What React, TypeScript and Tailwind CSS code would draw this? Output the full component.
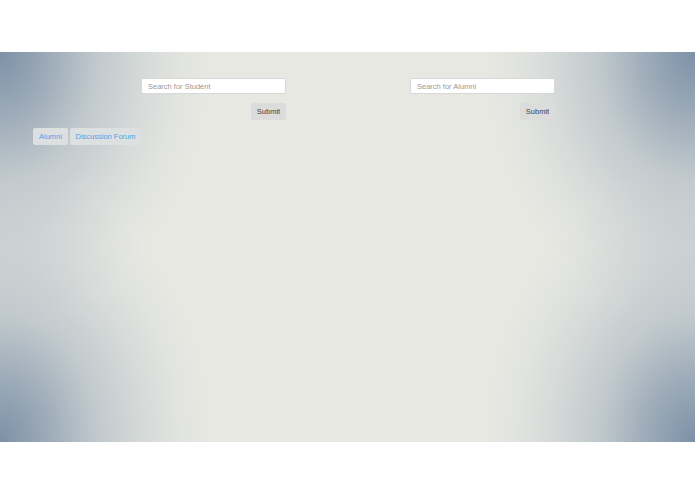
// corner vignette: four soft elliptical shades over a pale base
const vignette =
  "bg-[#e7e8e2] bg-[image:radial-gradient(ellipse_300px_390px_at_0%_0%,rgba(125,145,167,1)_0%,rgba(125,145,167,0.82)_10%,rgba(125,145,167,0.62)_20%,rgba(125,145,167,0.34)_33%,rgba(125,145,167,0.14)_50%,rgba(125,145,167,0.05)_60%,rgba(125,145,167,0)_70%),radial-gradient(ellipse_300px_390px_at_100%_0%,rgba(125,145,167,1)_0%,rgba(125,145,167,0.82)_10%,rgba(125,145,167,0.62)_20%,rgba(125,145,167,0.34)_33%,rgba(125,145,167,0.14)_50%,rgba(125,145,167,0.05)_60%,rgba(125,145,167,0)_70%),radial-gradient(ellipse_300px_390px_at_0%_100%,rgba(125,145,167,1)_0%,rgba(125,145,167,0.82)_10%,rgba(125,145,167,0.62)_20%,rgba(125,145,167,0.34)_33%,rgba(125,145,167,0.14)_50%,rgba(125,145,167,0.05)_60%,rgba(125,145,167,0)_70%),radial-gradient(ellipse_300px_390px_at_100%_100%,rgba(125,145,167,1)_0%,rgba(125,145,167,0.82)_10%,rgba(125,145,167,0.62)_20%,rgba(125,145,167,0.34)_33%,rgba(125,145,167,0.14)_50%,rgba(125,145,167,0.05)_60%,rgba(125,145,167,0)_70%)]";

function SearchBox({ placeholder }: { placeholder: string }) {
  return (
    <div className="flex w-[145px] flex-col items-end">
      <input
        type="text"
        placeholder={placeholder}
        className="h-[16px] w-full rounded-[2px] border border-[#d8d8d8] bg-white px-[6px] text-[7.5px] text-[#555] outline-none placeholder:text-[#9a9a9a]"
      />
      <button className="mt-[9px] h-[17px] w-[35px] rounded-[2px] bg-[#dcdcdc] text-[7.5px] text-[#444]">
        Submit
      </button>
    </div>
  );
}

export default function App() {
  return (
    <div className="h-[494px] w-[695px] bg-white font-['Liberation_Sans',Arial,sans-serif]">
      <div className="h-[52px]" />
      <main className={`h-[390px] w-full ${vignette}`}>
        <div className="flex pt-[26px]">
          <div className="ml-[141px]">
            <SearchBox placeholder="Search for Student" />
          </div>
          <div className="ml-[124px]">
            <SearchBox placeholder="Search for Alumni" />
          </div>
        </div>
        <nav className="ml-[33px] mt-[8px] flex gap-[2px]">
          <a className="flex h-[17px] w-[35px] items-center justify-center rounded-[2px] bg-[#dde0e0] text-[7.5px] text-[#4fa3e6]">
            Alumni
          </a>
          <a className="flex h-[17px] w-[71px] items-center justify-center rounded-[2px] bg-[#dde0e0] text-[7.5px] text-[#4fa3e6]">
            Discussion Forum
          </a>
        </nav>
      </main>
    </div>
  );
}
